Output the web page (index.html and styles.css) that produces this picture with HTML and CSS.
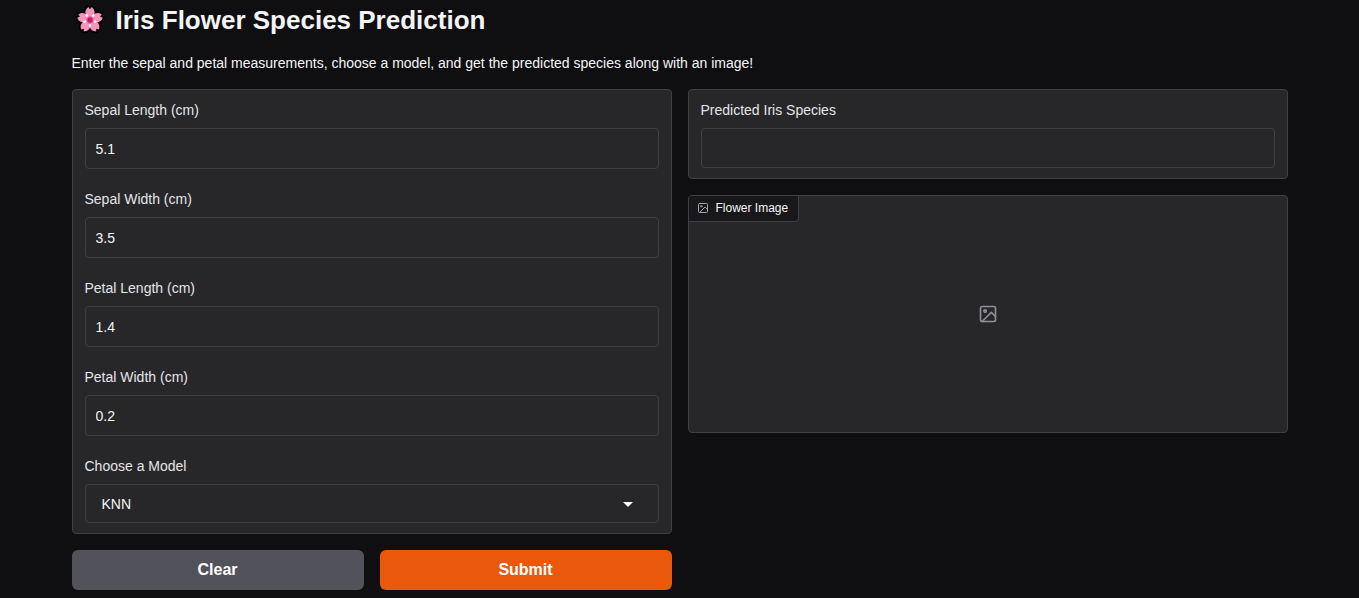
FILE: index.html
```html
<!DOCTYPE html>
<html lang="en">
<head>
<meta charset="utf-8">
<meta name="viewport" content="width=device-width, initial-scale=1">
<title>Iris Flower Species Prediction</title>
<link rel="stylesheet" href="styles.css">
</head>
<body>
<svg class="symbols" aria-hidden="true">
  <symbol id="picture" viewBox="0 0 24 24" fill="none" stroke="currentColor" stroke-width="2" stroke-linecap="round" stroke-linejoin="round">
    <rect x="3" y="3" width="18" height="18" rx="2"/>
    <circle cx="8.5" cy="8.5" r="1.5"/>
    <path d="M21 15l-5-5L5 21"/>
  </symbol>
</svg>
<main class="app">
  <h1 class="title">
    <svg class="blossom" viewBox="0 0 36 36" aria-hidden="true">
      <defs>
        <path id="petal" d="M18 19C13 15 11.500 9 14 5.500L16 3.500L18 6L20 3.500L22 5.500C24.500 9 23 15 18 19Z"/>
        <path id="stamen" d="M18 18V11.500M16.800 11.500h2.400"/>
      </defs>
      <g class="blossom-edge">
        <use href="#petal"/><use href="#petal" transform="rotate(72 18 18)"/><use href="#petal" transform="rotate(144 18 18)"/><use href="#petal" transform="rotate(216 18 18)"/><use href="#petal" transform="rotate(288 18 18)"/>
      </g>
      <g class="blossom-petals">
        <use href="#petal"/><use href="#petal" transform="rotate(72 18 18)"/><use href="#petal" transform="rotate(144 18 18)"/><use href="#petal" transform="rotate(216 18 18)"/><use href="#petal" transform="rotate(288 18 18)"/>
      </g>
      <g class="blossom-stamens">
        <use href="#stamen" transform="rotate(36 18 18)"/><use href="#stamen" transform="rotate(108 18 18)"/><use href="#stamen" transform="rotate(180 18 18)"/><use href="#stamen" transform="rotate(252 18 18)"/><use href="#stamen" transform="rotate(324 18 18)"/>
      </g>
      <circle class="blossom-ring" cx="18" cy="18" r="4.500"/>
      <circle class="blossom-core" cx="18" cy="18" r="3"/>
    </svg>
    <span>Iris Flower Species Prediction</span>
  </h1>
  <p class="description">Enter the sepal and petal measurements, choose a model, and get the predicted species along with an image!</p>
  <div class="columns">
    <form class="column">
      <div class="panel">
        <div class="field"><label for="sepal-length">Sepal Length (cm)</label><input class="control" id="sepal-length" type="text" inputmode="decimal" value="5.1"></div>
        <div class="field"><label for="sepal-width">Sepal Width (cm)</label><input class="control" id="sepal-width" type="text" inputmode="decimal" value="3.5"></div>
        <div class="field"><label for="petal-length">Petal Length (cm)</label><input class="control" id="petal-length" type="text" inputmode="decimal" value="1.4"></div>
        <div class="field"><label for="petal-width">Petal Width (cm)</label><input class="control" id="petal-width" type="text" inputmode="decimal" value="0.2"></div>
        <div class="field">
          <label for="model">Choose a Model</label>
          <div class="dropdown">
            <select class="control model" id="model"><option>KNN</option></select>
            <svg class="caret" viewBox="0 0 18 18" aria-hidden="true"><path d="M4 7l5 5 5-5z"/></svg>
          </div>
        </div>
      </div>
      <div class="actions">
        <button class="button clear" type="reset">Clear</button>
        <button class="button submit" type="button">Submit</button>
      </div>
    </form>
    <section class="column">
      <div class="panel">
        <div class="field"><label for="species">Predicted Iris Species</label><input class="control result" id="species" type="text" readonly></div>
      </div>
      <figure class="panel image-panel">
        <figcaption class="image-label"><svg class="label-icon" aria-hidden="true"><use href="#picture"/></svg>Flower Image</figcaption>
        <svg class="empty-icon" aria-hidden="true"><use href="#picture"/></svg>
      </figure>
    </section>
  </div>
</main>
</body>
</html>
```

FILE: styles.css
```css
* { box-sizing: border-box; }

body {
  margin: 0;
  background: #0f0f11;
  color: #f4f4f5;
  font: 14px/20px "Liberation Sans", Arial, sans-serif;
}

.symbols { display: none; }

.app {
  max-width: 1280px;
  margin: 0 auto;
  padding: 0 32px 8px;
}

.title {
  display: flex;
  align-items: center;
  gap: 8px;
  margin: 0;
  height: 40px;
  font-size: 26px;
  line-height: 40px;
}

.blossom { width: 32px; height: 32px; margin: 0 2px; }
.blossom-edge { fill: #000; stroke: #000; stroke-width: 4; stroke-linejoin: round; }
.blossom-petals { fill: #f794bd; }
.blossom-stamens { fill: none; stroke: #fff; stroke-width: 2; }
.blossom-ring { fill: #f472a8; }
.blossom-core { fill: #d41464; }

.description { margin: 13px 0 16px; }

.columns {
  display: grid;
  grid-template-columns: 1fr 1fr;
  align-items: start;
  gap: 16px;
}

.column {
  display: flex;
  flex-direction: column;
  gap: 16px;
  min-width: 0;
}

.panel {
  margin: 0;
  border: 1px solid #3f3f46;
  border-radius: 4px;
  background: #27272a;
}

.field {
  display: flex;
  flex-direction: column;
  gap: 8px;
  padding: 10px 12px;
}

.field label { color: #e4e4e7; }

.control {
  width: 100%;
  height: 41px;
  padding: 0 10px;
  border: 1px solid #3f3f46;
  border-radius: 4px;
  background: #27272a;
  color: #f4f4f5;
  font: inherit;
}

.dropdown { display: grid; align-items: center; }
.dropdown > * { grid-area: 1 / 1; }

.model {
  height: 39px;
  padding: 0 16px;
  appearance: none;
}

.caret {
  justify-self: end;
  width: 18px;
  height: 18px;
  margin-right: 22px;
  fill: #fff;
  pointer-events: none;
}

.result { height: 40px; }

.actions {
  display: grid;
  grid-template-columns: 1fr 1fr;
  gap: 16px;
}

.button {
  height: 40px;
  border: 0;
  border-radius: 6px;
  color: #fff;
  font: bold 16px/24px "Liberation Sans", Arial, sans-serif;
}

.clear { background: #52525b; }
.submit { background: #ea580c; }

.image-panel {
  display: grid;
  grid-template-rows: auto 1fr auto;
  min-height: 238px;
}

.image-label {
  display: flex;
  align-items: center;
  justify-self: start;
  gap: 7px;
  height: 26px;
  padding: 0 10px 2px 8px;
  border: solid #3f3f46;
  border-width: 0 1px 1px 0;
  border-radius: 3px 0 4px 0;
  background: #18181b;
  font-size: 12px;
}

.label-icon { width: 12px; height: 12px; color: #a1a1aa; }

.empty-icon {
  place-self: center;
  width: 20px;
  height: 20px;
  margin-bottom: 26px;
  color: #8e8e93;
}
```
